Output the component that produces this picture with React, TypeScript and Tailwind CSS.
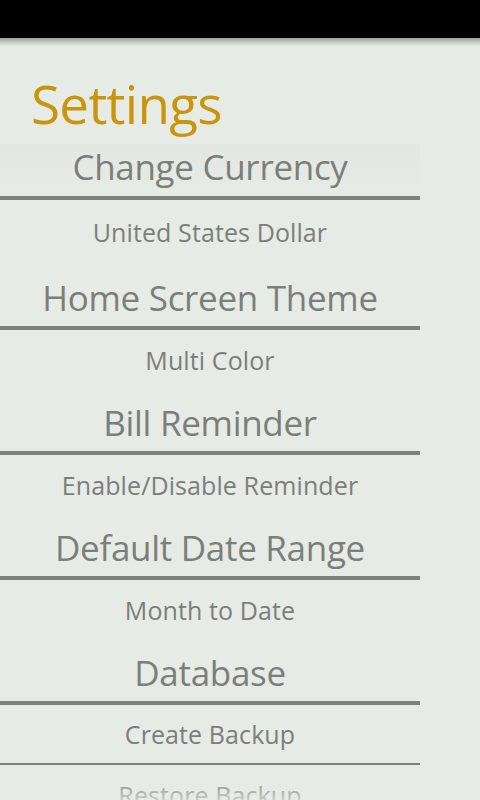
const font = { fontFamily: '"Open Sans", "Noto Sans", sans-serif' };

const textCls = "text-[#7b7f7a] leading-none";

function Header({ text, h }: { text: string; h: string }) {
  return (
    <div className={`flex items-end justify-center ${h} border-b-4 border-[#7e827d]`}>
      <span className={`text-[35px] tracking-[-0.3px] ${textCls}`}>{text}</span>
    </div>
  );
}

function Item({ text, h, pt, thinLine }: { text: string; h: string; pt: string; thinLine?: boolean }) {
  return (
    <div className={`flex justify-center ${h} ${pt} ${thinLine ? "border-b-2 border-[#7e827d]" : ""}`}>
      <span className={`text-[25px] tracking-[0.1px] ${textCls}`}>{text}</span>
    </div>
  );
}

export default function App() {
  return (
    <div className="w-[480px] h-[800px] overflow-hidden bg-[#e7ebe6] flex flex-col" style={font}>
      <div className="h-[38px] bg-black shrink-0" />
      <div className="h-[8px] shrink-0 bg-gradient-to-b from-[#9ea29d] to-[#e7ebe6]" />

      <h1 className="mt-[31px] pl-[31px] text-[53px] tracking-[-0.7px] leading-none text-[#c9950c] font-normal">
        Settings
      </h1>

      <div className="relative mt-[14px] w-[420px] shrink-0">
        <div className="absolute left-0 right-0 top-0 h-[48px] bg-gradient-to-b from-[#dde1dc]/40 to-transparent" />

        <Header text="Change Currency" h="relative h-[56px] pb-[12px]" />
        <Item text="United States Dollar" h="h-[67px]" pt="pt-[20px]" />
        <Header text="Home Screen Theme" h="h-[63px] pb-[11px]" />

        <Item text="Multi Color" h="h-[62px]" pt="pt-[18px]" />
        <Header text="Bill Reminder" h="h-[63px] pb-[11px]" />

        <Item text="Enable/Disable Reminder" h="h-[62px]" pt="pt-[18px]" />
        <Header text="Default Date Range" h="h-[63px] pb-[11px]" />

        <Item text="Month to Date" h="h-[62px]" pt="pt-[18px]" />
        <Header text="Database" h="h-[63px] pb-[11px]" />

        <Item text="Create Backup" h="h-[60px]" pt="pt-[17px]" thinLine />
        <Item text="Restore Backup" h="h-[62px]" pt="pt-[18px]" />
      </div>

      <div className="fixed left-0 top-[782px] w-[420px] h-[18px] bg-gradient-to-b from-[#e7ebe6]/20 to-[#e7ebe6]/70" />
    </div>
  );
}
